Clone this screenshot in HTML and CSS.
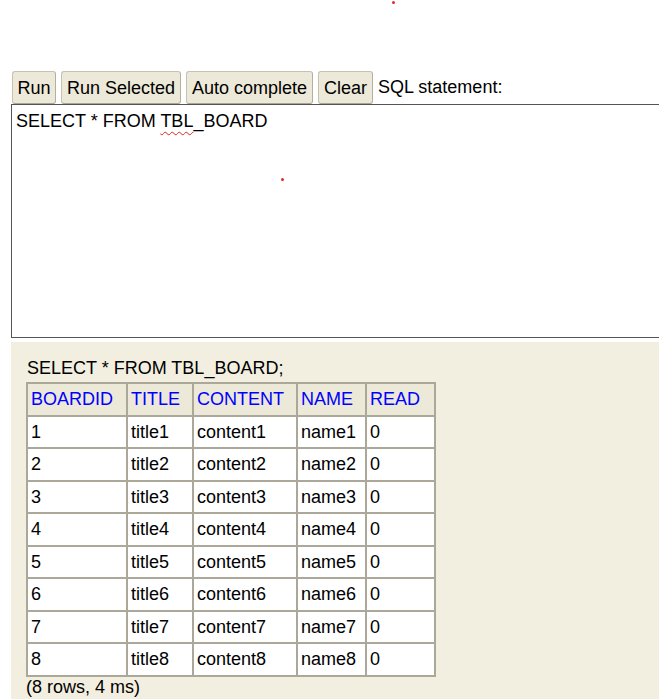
FILE: index.html
```html
<!DOCTYPE html>
<html>
<head>
<meta charset="utf-8">
<link rel="stylesheet" href="styles.css">
</head>
<body>
<div class="page">
  <div class="toolbar">
    <button class="btn b-run">Run</button>
    <button class="btn b-sel">Run Selected</button>
    <button class="btn b-auto">Auto complete</button>
    <button class="btn b-clear">Clear</button>
    <span class="label">SQL statement:</span>
  </div>
  <div class="editor">SELECT * FROM <span class="spell">TBL</span>_BOARD</div>
  <div class="result">
    <div class="stmt">SELECT * FROM TBL_BOARD;</div>
    <table class="grid">
      <thead>
        <tr><th class="c1">BOARDID</th><th class="c2">TITLE</th><th class="c3">CONTENT</th><th class="c4">NAME</th><th class="c5">READ</th></tr>
      </thead>
      <tbody>
        <tr><td>1</td><td>title1</td><td>content1</td><td>name1</td><td>0</td></tr>
        <tr><td>2</td><td>title2</td><td>content2</td><td>name2</td><td>0</td></tr>
        <tr><td>3</td><td>title3</td><td>content3</td><td>name3</td><td>0</td></tr>
        <tr><td>4</td><td>title4</td><td>content4</td><td>name4</td><td>0</td></tr>
        <tr><td>5</td><td>title5</td><td>content5</td><td>name5</td><td>0</td></tr>
        <tr><td>6</td><td>title6</td><td>content6</td><td>name6</td><td>0</td></tr>
        <tr><td>7</td><td>title7</td><td>content7</td><td>name7</td><td>0</td></tr>
        <tr><td>8</td><td>title8</td><td>content8</td><td>name8</td><td>0</td></tr>
      </tbody>
    </table>
    <div class="summary">(8 rows, 4 ms)</div>
  </div>
</div>
<span class="dot dot-a"></span>
<span class="dot dot-b"></span>
</body>
</html>
```

FILE: styles.css
```css
html, body {
  margin: 0;
  padding: 0;
  background: #ffffff;
  overflow: hidden;
  height: 699px;
}
body {
  font-family: "Liberation Sans", Arial, sans-serif;
  font-size: 18px;
  color: #000;
  position: relative;
}
.page {
  padding-top: 71px;
  padding-left: 11px;
}
.toolbar {
  display: flex;
  align-items: center;
  gap: 5px;
  height: 33px;
  padding-left: 1px;
}
.btn {
  font-family: "Liberation Sans", Arial, sans-serif;
  font-size: 18px;
  color: #000;
  height: 33px;
  padding: 0;
  margin: 0;
  text-align: center;
  white-space: nowrap;
  background: #ece9d8;
  border: 1px solid #c5c2b2;
  border-bottom-color: #a8a596;
  border-right-color: #b3b0a1;
  border-radius: 3px;
  line-height: 20px;
}
.b-run { width: 44px; }
.b-sel { width: 120px; }
.b-auto { width: 127px; }
.b-clear { width: 55px; }
.label {
  line-height: 20px;
  padding-bottom: 2px;
}
.editor {
  height: 234px;
  width: 660px;
  box-sizing: border-box;
  border: 1px solid #555555;
  padding: 6px 4px 3px;
  line-height: 21px;
  background: #fff;
}
.spell {
  text-decoration: underline wavy #e02020;
  text-decoration-thickness: 1px;
  text-underline-offset: 4px;
}
.result {
  margin-top: 4px;
  background: #f2efe0;
  height: 357px;
  box-sizing: border-box;
  padding: 16px 0 0 15px;
}
.stmt {
  line-height: 21px;
  margin-left: 1px;
  margin-bottom: 3px;
}
.grid {
  border-collapse: collapse;
  border: 2px solid #aca899;
  background: #ffffff;
}
.grid th, .grid td {
  border: 2px solid #aca899;
  padding: 5px 3px;
  line-height: 20.5px;
  text-align: left;
  font-weight: normal;
  white-space: nowrap;
}
.grid th {
  background: #ece9d8;
  color: #0000ff;
}
.c1 { width: 92px; }
.c2 { width: 58px; }
.c3 { width: 96px; }
.c4 { width: 61px; }
.c5 { width: 61px; }
.summary {
  line-height: 21px;
}
.dot {
  position: absolute;
  width: 3px;
  height: 3px;
  border-radius: 50%;
  background: #e0282e;
}
.dot-a { left: 392px; top: 1px; }
.dot-b { left: 281px; top: 178px; }
```
